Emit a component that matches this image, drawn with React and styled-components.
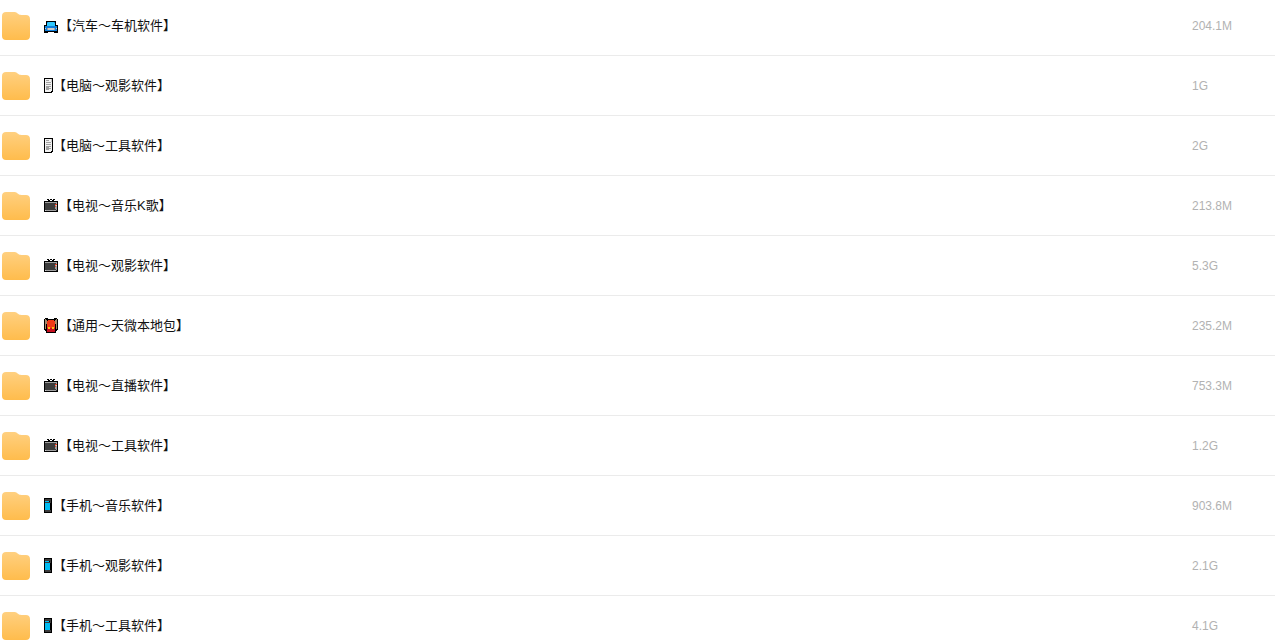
import React from "react";
import styled, { createGlobalStyle } from "styled-components";

const files = [
  { icon: "car", name: "【汽车～车机软件】", size: "204.1M" },
  { icon: "page", name: "【电脑～观影软件】", size: "1G" },
  { icon: "page", name: "【电脑～工具软件】", size: "2G" },
  { icon: "tv", name: "【电视～音乐K歌】", size: "213.8M" },
  { icon: "tv", name: "【电视～观影软件】", size: "5.3G" },
  { icon: "bag", name: "【通用～天微本地包】", size: "235.2M" },
  { icon: "tv", name: "【电视～直播软件】", size: "753.3M" },
  { icon: "tv", name: "【电视～工具软件】", size: "1.2G" },
  { icon: "phone", name: "【手机～音乐软件】", size: "903.6M" },
  { icon: "phone", name: "【手机～观影软件】", size: "2.1G" },
  { icon: "phone", name: "【手机～工具软件】", size: "4.1G" },
];

const palette = {
  k: "#000000",
  d: "#3b3b3b",
  g: "#a0a0a0",
  l: "#cccccc",
  w: "#f2f2f2",
  b: "#0f80dc",
  s: "#00bcf2",
  c: "#30c8fc",
  r: "#f03a17",
  m: "#c50f1f",
  y: "#fcc010",
  t: "#a58a6c",
};

// one character per pixel, a dot is left empty
const sprites = {
  car: [
    "..............",
    "..............",
    "..............",
    "..kkkkkkkkkk..",
    "..kbccccccbk..",
    "..kcccccccck..",
    "..kcccccccck..",
    "kkkcccccccckkk",
    "kbbbbbbbbbbbbk",
    "kbbbbbbbbbbbbk",
    "klbgllllllgblk",
    "kbbgllllllgbbk",
    "kbbbbbbbbbbbbk",
    "kkkkkkkkkkkkkk",
    "kkkk......kkkk",
  ],
  page: [
    "kkkkkkkkk",
    "kwwwwwwlk",
    "kwgggwwlk",
    "kwwwwwwlk",
    "kwgggggwk",
    "kwwwwwwwk",
    "kwgggggwk",
    "kwwwwwwwk",
    "kwgggggwk",
    "kwgggwwwk",
    "kwgggggwk",
    "kwgggwwwk",
    "kwwwwwwwk",
    "kwwwwwwkk",
    "kkkkkkkk.",
  ],
  tv: [
    "..............",
    "...kk.kk.kk...",
    "....kk..kk....",
    "kkkkkkkkkkkkkk",
    "kggggggggggggk",
    "kdddddddddddgk",
    "kddddddddddrrk",
    "kddddddddddglk",
    "kddddddddddrgk",
    "kddddddddddggk",
    "kddddddddddggk",
    "kdddddddddddgk",
    "klggggggggggdk",
    "kkkkkkkkkkkkkk",
    "..............",
  ],
  bag: [
    ".kkk......kkk.",
    "ktkkkkkkkkkktk",
    "kttkrrrrrrkttk",
    "kttrrrrrrrrttk",
    "kttrrrrrrrrttk",
    "kttrrrrrrrrttk",
    "ktkrrrrrrrrktk",
    "ktkrrrrrrrrktk",
    "ktkrrrrrrrrktk",
    "ktkryyrryyrktk",
    "ktkmyymmyymktk",
    "kkkmmmmmmmmkkk",
    ".kkmmmmmmmmkk.",
    "..kmmmmmmmmk..",
    "..kkkkkkkkkk..",
  ],
  phone: [
    "kkkkkkkk",
    "kddddddk",
    "kddddddk",
    "ksssskdk",
    "kddddddk",
    "kssssskk",
    "kssssskk",
    "kssssskk",
    "kssssskk",
    "kssssskk",
    "kssssskk",
    "kssssskk",
    "kddddddk",
    "kddddddk",
    "kkkkkkkk",
  ],
};

const PixelIcon = ({ name }) => {
  const rows = sprites[name];
  const width = rows[0].length > 9 ? 15 : 9;

  return (
    <Sprite
      width={width}
      height="15"
      viewBox={`0 0 ${width} 15`}
      shapeRendering="crispEdges"
      aria-hidden="true"
    >
      {rows.map((row, y) =>
        row.split("").map((key, x) =>
          key === "." ? null : (
            <rect
              key={`${x}-${y}`}
              x={x}
              y={y}
              width="1"
              height="1"
              fill={palette[key]}
            />
          )
        )
      )}
    </Sprite>
  );
};

const FolderIcon = () => (
  <Folder viewBox="0 0 28 28" aria-hidden="true">
    <defs>
      <linearGradient id="folder" x1="0" y1="0" x2="0" y2="1">
        <stop offset="0" stopColor="#ffd080" />
        <stop offset="1" stopColor="#ffbc4c" />
      </linearGradient>
    </defs>
    <path
      fill="url(#folder)"
      d="M4 0H12.5C14.5 0 15.3 1.2 16.4 2.1C17.3 2.8 18 3 19.2 3H24C26.5 3 28 4.5 28 7V24C28 26.5 26.5 28 24 28H4C1.5 28 0 26.5 0 24V4C0 1.5 1.5 0 4 0Z"
    />
  </Folder>
);

const App = () => {
  return (
    <>
      <GlobalStyle />
      <FileList>
        {files.map((file) => (
          <FileRow key={file.name}>
            <FileLink href="#">
              <FolderIcon />
              <FileName>
                <PixelIcon name={file.icon} />
                {file.name}
              </FileName>
            </FileLink>
            <FileSize>{file.size}</FileSize>
          </FileRow>
        ))}
      </FileList>
    </>
  );
};

export default App;

const GlobalStyle = createGlobalStyle`
  * {
    box-sizing: border-box;
  }

  body {
    margin: 0;
    background-color: #fff;
    font-family: "Liberation Sans", "Noto Sans CJK SC", sans-serif;
  }
`;

const FileList = styled.ul`
  height: 100vh;
  margin: 0;
  padding: 0;
  overflow: hidden;
  list-style: none;
`;

const FileRow = styled.li`
  display: grid;
  grid-template-columns: 1fr 83px;
  align-items: center;
  padding: 16px 0 15px;
  border-bottom: 1px solid #ebebeb;

  &:first-child {
    padding-top: 12px;
  }
`;

const FileLink = styled.a`
  display: flex;
  align-items: center;
  gap: 14px;
  padding-left: 2px;
  color: #111;
  text-decoration: none;
`;

const Folder = styled.svg`
  width: 28px;
  height: 28px;
  flex-shrink: 0;
`;

const FileName = styled.span`
  display: flex;
  align-items: center;
  font-size: 13px;
  line-height: 20px;
  white-space: nowrap;
`;

const Sprite = styled.svg`
  flex-shrink: 0;
  margin-bottom: 1px;
`;

const FileSize = styled.span`
  color: #b2b2b2;
  font-size: 12px;
  line-height: 20px;
`;
